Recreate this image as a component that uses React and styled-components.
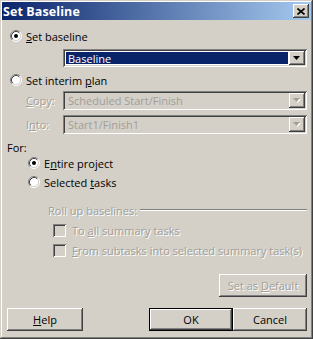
import React from "react";
import styled, { createGlobalStyle, css } from "styled-components";

const Global = createGlobalStyle`
  html, body { margin: 0; padding: 0; background: #d4d0c8; }
  body { font-family: "Open Sans", "Liberation Sans", sans-serif; font-size: 11px; color: #000; }
`;

const raised = css`
  box-shadow: inset -1px -1px #404040, inset 1px 1px #fff,
    inset -2px -2px #808080, inset 2px 2px #d4d0c8;
`;

const sunken = css`
  box-shadow: inset 1px 1px #808080, inset -1px -1px #fff,
    inset 2px 2px #404040, inset -2px -2px #d4d0c8;
`;

const Window = styled.div`
  width: 313px;
  height: 339px;
  box-sizing: border-box;
  padding: 2px;
  background: #d4d0c8;
  box-shadow: inset -1px -1px #404040, inset 1px 1px #d4d0c8,
    inset -2px -2px #808080, inset 2px 2px #fff;
  display: flex;
  flex-direction: column;
`;

const TitleBar = styled.div`
  height: 18px;
  display: flex;
  align-items: center;
  justify-content: space-between;
  padding: 0 2px 0 1px;
  background: linear-gradient(to right, #0a246a, #a6caf0);
`;

const Title = styled.span`
  color: #fff;
  font-weight: bold;
  font-size: 12.5px;
  letter-spacing: 0.1px;
`;

const CloseButton = styled.div`
  width: 16px;
  height: 14px;
  background: #d4d0c8;
  ${raised};
  display: flex;
  align-items: center;
  justify-content: center;
`;

const Content = styled.div`
  display: flex;
  flex-direction: column;
  padding: 0 4px 0 5px;
`;

const OptionRow = styled.div`
  display: flex;
  align-items: center;
  gap: 4px;
  height: 16px;
  margin-top: ${(p) => p.$top || 0}px;
  padding-left: ${(p) => p.$indent || 0}px;
  color: ${(p) => (p.$disabled ? "#a19e98" : "#000")};
  text-shadow: ${(p) => (p.$disabled ? "1px 1px #fff" : "none")};
`;

const FieldRow = styled.div`
  display: grid;
  grid-template-columns: 56px 1fr;
  align-items: center;
  margin-top: ${(p) => p.$top || 0}px;
`;

const FieldLabel = styled.span`
  padding-left: 19px;
  color: #a19e98;
  text-shadow: 1px 1px #fff;
`;

const Combo = styled.div`
  height: ${(p) => p.$h || 19}px;
  box-sizing: border-box;
  padding: 2px;
  display: flex;
  align-items: stretch;
  background: ${(p) => (p.$disabled ? "#d4d0c8" : "#fff")};
  ${sunken};
  margin-left: ${(p) => p.$indent || 0}px;
  margin-top: ${(p) => p.$top || 0}px;
`;

const ComboText = styled.div`
  flex: 1;
  display: flex;
  align-items: center;
  padding-left: 2px;
  margin: 1px;
  background: ${(p) => (p.$selected ? "#0a246a" : "transparent")};
  color: ${(p) => (p.$selected ? "#fff" : p.$disabled ? "#a19e98" : "#000")};
`;

const DropButton = styled.div`
  width: 16px;
  background: #d4d0c8;
  ${raised};
  display: flex;
  align-items: center;
  justify-content: center;
`;

const SectionLabel = styled.div`
  height: 14px;
  line-height: 14px;
  margin-top: 7px;
`;

const GroupHeader = styled.div`
  display: flex;
  align-items: center;
  gap: 3px;
  height: 16px;
  margin-top: 12px;
  padding-left: 41px;
  color: #a19e98;
  text-shadow: 1px 1px #fff;
`;

const Etched = styled.div`
  flex: 1;
  border-top: 1px solid #808080;
  border-bottom: 1px solid #fff;
  margin-top: -1px;
`;

const CheckBox = styled.div`
  width: 13px;
  height: 13px;
  box-sizing: border-box;
  background: #d4d0c8;
  ${sunken};
  margin-right: 2px;
`;

const Button = styled.div`
  width: ${(p) => p.$w}px;
  height: 23px;
  box-sizing: border-box;
  display: flex;
  align-items: center;
  justify-content: center;
  background: #d4d0c8;
  ${raised};
  color: ${(p) => (p.$disabled ? "#a19e98" : "#000")};
  text-shadow: ${(p) => (p.$disabled ? "1px 1px #fff" : "none")};
  ${(p) =>
    p.$default &&
    css`
      border: 1px solid #000;
    `}
`;

const DefaultRow = styled.div`
  display: flex;
  justify-content: flex-end;
  margin-top: 16px;
`;

const ButtonRow = styled.div`
  display: flex;
  margin-top: 11px;
`;

const Spacer = styled.div`
  flex: 1;
`;

const Radio = ({ checked }) => (
  <svg width="12" height="12" viewBox="0 0 12 12">
    <circle cx="6" cy="6" r="5" fill="#fff" />
    <path d="M2.11 9.89 A5.5 5.5 0 0 1 9.89 2.11" stroke="#808080" fill="none" />
    <path d="M9.89 2.11 A5.5 5.5 0 0 1 2.11 9.89" stroke="#fff" fill="none" />
    <path d="M2.82 9.18 A4.5 4.5 0 0 1 9.18 2.82" stroke="#404040" fill="none" />
    <path d="M9.18 2.82 A4.5 4.5 0 0 1 2.82 9.18" stroke="#d4d0c8" fill="none" />
    {checked && <circle cx="6" cy="6" r="2" fill="#000" />}
  </svg>
);

const Arrow = ({ disabled }) => (
  <svg width="8" height="5" viewBox="0 0 8 5">
    {disabled && <path d="M1 1 H8 L4.5 5 Z" fill="#fff" />}
    <path d="M0 0 H7 L3.5 4 Z" fill={disabled ? "#a19e98" : "#000"} />
  </svg>
);

const CloseIcon = () => (
  <svg width="8" height="7" viewBox="0 0 8 7">
    <path d="M0.5 0.5 L7.5 6.5 M7.5 0.5 L0.5 6.5" stroke="#000" strokeWidth="1.6" />
  </svg>
);

const App = () => {
  return (
    <>
      <Global />
      <Window>
        <TitleBar>
          <Title>Set Baseline</Title>
          <CloseButton>
            <CloseIcon />
          </CloseButton>
        </TitleBar>
        <Content>
          <OptionRow $top={8} $indent={3}>
            <Radio checked />
            <span>
              <u>S</u>et baseline
            </span>
          </OptionRow>
          <Combo $indent={56} $top={5} $h={18}>
            <ComboText $selected>Baseline</ComboText>
            <DropButton>
              <Arrow />
            </DropButton>
          </Combo>
          <OptionRow $top={5} $indent={3}>
            <Radio />
            <span>
              Set interim <u>p</u>lan
            </span>
          </OptionRow>
          <FieldRow $top={3}>
            <FieldLabel>
              <u>C</u>opy:
            </FieldLabel>
            <Combo $disabled>
              <ComboText $disabled>Scheduled Start/Finish</ComboText>
              <DropButton>
                <Arrow disabled />
              </DropButton>
            </Combo>
          </FieldRow>
          <FieldRow $top={5}>
            <FieldLabel>
              I<u>n</u>to:
            </FieldLabel>
            <Combo $disabled>
              <ComboText $disabled>Start1/Finish1</ComboText>
              <DropButton>
                <Arrow disabled />
              </DropButton>
            </Combo>
          </FieldRow>
          <SectionLabel>For:</SectionLabel>
          <OptionRow $indent={21}>
            <Radio checked />
            <span>
              E<u>n</u>tire project
            </span>
          </OptionRow>
          <OptionRow $top={3} $indent={21}>
            <Radio />
            <span>
              Selected <u>t</u>asks
            </span>
          </OptionRow>
          <GroupHeader>
            <span>Roll up baselines:</span>
            <Etched />
          </GroupHeader>
          <OptionRow $top={4} $indent={46} $disabled>
            <CheckBox />
            <span>
              To <u>a</u>ll summary tasks
            </span>
          </OptionRow>
          <OptionRow $top={4} $indent={46} $disabled>
            <CheckBox />
            <span>
              <u>F</u>rom subtasks into selected summary task(s)
            </span>
          </OptionRow>
          <DefaultRow>
            <Button $w={88} $disabled>
              <span>
                Set as <u>D</u>efault
              </span>
            </Button>
          </DefaultRow>
          <ButtonRow>
            <Button $w={76}>
              <span>
                <u>H</u>elp
              </span>
            </Button>
            <Spacer />
            <Button $w={84} $default>
              OK
            </Button>
            <Button $w={74}>Cancel</Button>
          </ButtonRow>
        </Content>
      </Window>
    </>
  );
};

export default App;
